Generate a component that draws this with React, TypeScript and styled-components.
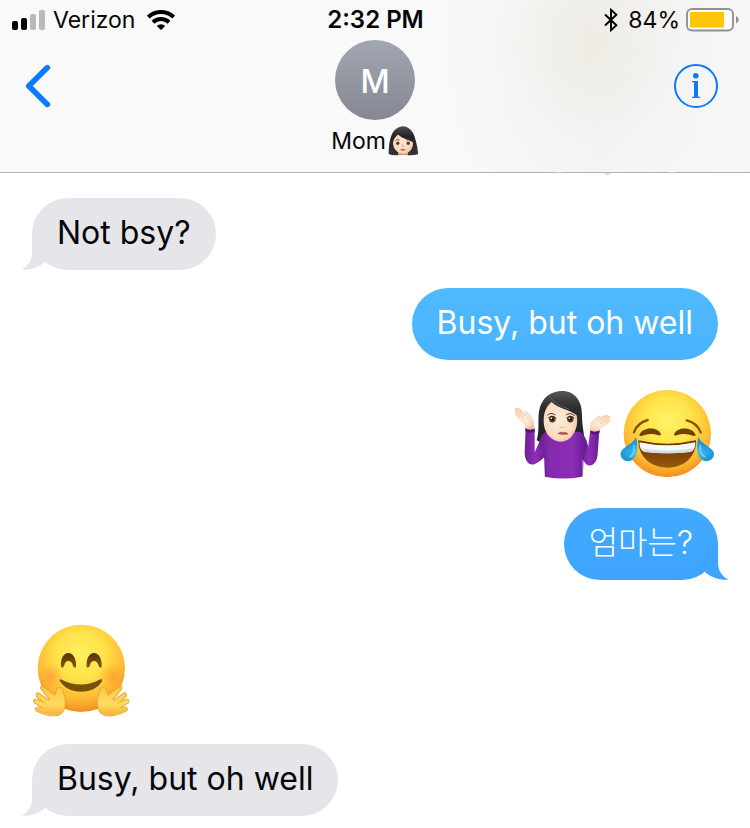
import React from "react";
import styled, { createGlobalStyle, css } from "styled-components";

const GlobalStyle = createGlobalStyle`
  * { box-sizing: border-box; }
  body {
    margin: 0;
    background: #fff;
    color: #060608;
    font-family: Inter, "Noto Sans CJK KR", sans-serif;
  }
  button {
    padding: 0;
    border: 0;
    background: none;
    color: inherit;
    font: inherit;
    cursor: pointer;
  }
  svg { display: block; flex: none; }
`;

const Screen = styled.div`
  display: flex;
  flex-direction: column;
  min-height: 100vh;
  overflow: hidden;
`;

const Header = styled.header`
  position: relative;
  border-bottom: 1px solid #b0b0b2;
  background:
    radial-gradient(ellipse 160px 180px at 79% 25%, rgba(234, 232, 220, 0.7), rgba(240, 240, 236, 0.35) 55%, transparent),
    linear-gradient(90deg, #f9f9f9 60%, #f6f4f6 80%, #f8f7f8);

  /* Bottom edge of a message that has scrolled under the bar. */
  &::after {
    content: "";
    position: absolute;
    top: 100%;
    left: 72%;
    width: 20%;
    height: 4px;
    background:
      radial-gradient(ellipse 7px 2px at 12% 0, #d4d4d6, transparent),
      radial-gradient(ellipse 5px 4px at 45% 0, #b9b9bc, transparent),
      radial-gradient(ellipse 6px 2px at 88% 0, #d4d4d6, transparent);
  }
`;

const StatusBar = styled.div`
  display: grid;
  grid-template-columns: 1fr auto 1fr;
  align-items: center;
  height: 40px;
  padding: 0 11px 0 12px;
  font-size: 23px;
  line-height: 40px;
`;

const StatusGroup = styled.div<{ $end?: boolean }>`
  display: flex;
  align-items: center;
  justify-content: ${(p) => (p.$end ? "flex-end" : "flex-start")};
  gap: ${(p) => (p.$end ? "6px" : "8px")};
`;

const Carrier = styled.span`
  margin-right: 4px;
`;

const Percent = styled.span`
  margin-left: 4px;
`;

const Time = styled.time`
  font-size: 24px;
  font-weight: 600;
`;

const NavBar = styled.nav`
  display: grid;
  grid-template-columns: 1fr auto 1fr;
  align-items: start;
  min-height: 132px;
  padding: 0 32px;
`;

const NavButton = styled.button<{ $end?: boolean }>`
  margin: 24px 0 0 ${(p) => (p.$end ? "0" : "-8px")};
  justify-self: ${(p) => (p.$end ? "end" : "start")};
  color: #0a7aff;
`;

const Contact = styled.button`
  display: flex;
  flex-direction: column;
  align-items: center;
`;

const Avatar = styled.span`
  display: grid;
  place-items: center;
  width: 80px;
  height: 80px;
  padding-top: 2px;
  border-radius: 50%;
  background: linear-gradient(#a2a6b1, #858892);
  color: #fff;
  font-size: 32px;
  font-weight: 500;
`;

const ContactName = styled.span`
  display: flex;
  align-items: center;
  gap: 2px;
  height: 42px;
  font-size: 23px;
`;

const Thread = styled.ul`
  display: flex;
  flex-direction: column;
  margin: 0;
  padding: 25px 32px 12px;
  list-style: none;
`;

const Message = styled.li<{ $sent?: boolean; $gap?: number }>`
  display: flex;
  gap: 8px;
  justify-content: ${(p) => (p.$sent ? "flex-end" : "flex-start")};
  margin-top: ${(p) => p.$gap ?? 0}px;
`;

const EmojiGroup = styled.span<{ $sent?: boolean }>`
  display: flex;
  gap: 8px;
  padding: 0 ${(p) => (p.$sent ? "3px" : "1px")};
`;

const Bubble = styled.div<{ $from: string; $to: string; $sent?: boolean }>`
  position: relative;
  padding: 15px 25px 17px;
  border-radius: 36px;
  background: linear-gradient(${(p) => p.$from}, ${(p) => p.$to});
  color: ${(p) => (p.$sent ? "#fff" : "#060608")};
  font-size: 32px;
  line-height: 40px;
`;

const Korean = styled.span`
  font-weight: 300;
`;

const TailSvg = styled.svg<{ $sent?: boolean }>`
  position: absolute;
  bottom: 0;
  ${(p) => (p.$sent ? css`right: -11px; transform: scaleX(-1);` : css`left: -11px;`)}
`;

function Tail({ color, sent }: { color: string; sent?: boolean }) {
  return (
    <TailSvg $sent={sent} width="36" height="36" viewBox="0 0 36 36" fill={color} aria-hidden="true">
      <path d="M11 0V19C11 26 7 33 0 35.6C9 36.4 16 34 23 29L30 20L20 0Z" />
    </TailSvg>
  );
}

function Signal() {
  return (
    <svg width="33" height="20" viewBox="0 0 33 20" role="img" aria-label="Signal strength">
      <rect x="0" y="11" width="6" height="9" rx="2" />
      <rect x="9" y="8" width="6" height="12" rx="2" />
      <rect x="18" y="4" width="6" height="16" rx="2" fill="#b9b9b9" />
      <rect x="27" y="0" width="6" height="20" rx="2" fill="#b9b9b9" />
    </svg>
  );
}

function Wifi() {
  return (
    <svg width="28" height="20" viewBox="0 0 28 20" fill="none" stroke="#000" strokeWidth="4" role="img" aria-label="Wi-Fi">
      <path d="M1.3 7.1a18.3 18.3 0 0 1 25.4 0" />
      <path d="M6 12.2a11.7 11.7 0 0 1 16 0" />
      <path d="M9.8 16a6.1 6.1 0 0 1 8.4 0L14 20Z" fill="#000" stroke="none" />
    </svg>
  );
}

function Bluetooth() {
  return (
    <svg width="14" height="24" viewBox="0 0 14 24" fill="none" stroke="#000" strokeWidth="1.9" role="img" aria-label="Bluetooth">
      <path d="M1 6.5L12.4 17.3L7 22.2V1.8L12.4 6.7L1 17.5" />
    </svg>
  );
}

function Battery() {
  return (
    <svg width="53" height="24" viewBox="0 0 53 24" role="img" aria-label="Battery 84%">
      <rect x="1" y="1" width="46" height="21.5" rx="5" fill="#fbfbfa" stroke="#929292" strokeWidth="1.9" />
      <rect x="4" y="4" width="34" height="15.5" rx="1" fill="#fdc708" />
      <path d="M50 8Q52.8 9 52.8 11.8T50 15.5Z" fill="#929292" />
    </svg>
  );
}

function Chevron() {
  return (
    <svg width="28" height="44" viewBox="0 0 28 44" fill="none" stroke="currentColor" strokeWidth="5.6" strokeLinecap="round" strokeLinejoin="round">
      <path d="M23.4 3.6L4.8 22L23.4 40.4" />
    </svg>
  );
}

function Info() {
  return (
    <svg width="44" height="44" viewBox="0 0 44 44">
      <circle cx="22" cy="22" r="21" fill="none" stroke="currentColor" strokeWidth="2" />
      <circle cx="21.8" cy="11.7" r="2.8" fill="currentColor" />
      <path d="M18 17H24V32.8H26.2V34H18V32.8H20V18.3H18Z" fill="currentColor" />
    </svg>
  );
}

function WomanFace() {
  return (
    <svg width="31" height="30" viewBox="23 21 92 89" role="img" aria-label="Woman">
      <defs>
        <linearGradient id="wHair" x1="0" y1="0" x2="0" y2="1">
          <stop offset="0" stopColor="#4c4c4e" />
          <stop offset=".35" stopColor="#242426" />
          <stop offset="1" stopColor="#343438" />
        </linearGradient>
        <radialGradient id="wSkin" cx=".45" cy=".45" r=".6">
          <stop offset="0" stopColor="#ffe9d0" />
          <stop offset=".75" stopColor="#f8d6b8" />
          <stop offset="1" stopColor="#e8b994" />
        </radialGradient>
      </defs>
      <path d="M58 24C74 16 96 31 102 53C108 73 112 91 112 105Q93 110 76 106H59Q40 110 25 104C25 82 28 56 37 41Q46 27 58 24Z" fill="url(#wHair)" />
      <path d="M53 91H83L82 106H53Z" fill="#dba982" />
      <path d="M38 70C40 58 46 51 53 46C64 58 82 60 97 69C99 85 89 103 68 104C49 103 37 86 38 70Z" fill="url(#wSkin)" />
      <path d="M46 64Q51 59 57 63M77 63Q84 59 90 65" fill="none" stroke="#4a352a" strokeWidth="2.5" />
      <ellipse cx="52" cy="72" rx="6.5" ry="5" fill="#fff" />
      <ellipse cx="83" cy="72" rx="6.5" ry="5" fill="#fff" />
      <circle cx="52" cy="72" r="5" fill="#59341d" />
      <circle cx="83" cy="72" r="5" fill="#59341d" />
      <path d="M67 75L65 83H70" fill="none" stroke="#d79a76" strokeWidth="2" />
      <path d="M58 91Q67 87 77 91Q67 98 58 91Z" fill="#c85c59" />
    </svg>
  );
}

function Shrug() {
  return (
    <svg width="96" height="96" viewBox="30 24 288 288" role="img" aria-label="Woman shrugging">
      <defs>
        <linearGradient id="sHair" x1="0" y1="0" x2="0" y2="1">
          <stop offset="0" stopColor="#575759" />
          <stop offset=".3" stopColor="#2d2d30" />
          <stop offset="1" stopColor="#202023" />
        </linearGradient>
        <radialGradient id="sSkin" cx=".45" cy=".45" r=".6">
          <stop offset="0" stopColor="#ffecd8" />
          <stop offset=".75" stopColor="#fadcc0" />
          <stop offset="1" stopColor="#ecc09c" />
        </radialGradient>
        <linearGradient id="sTop" x1="0" y1="0" x2="1" y2="0">
          <stop offset="0" stopColor="#6e1d94" />
          <stop offset=".22" stopColor="#862ab0" />
          <stop offset=".7" stopColor="#892db4" />
          <stop offset="1" stopColor="#64178b" />
        </linearGradient>
        <linearGradient id="sArm" x1="0" y1="0" x2="1" y2="0">
          <stop offset="0" stopColor="#711d99" />
          <stop offset=".5" stopColor="#8c2fb6" />
          <stop offset="1" stopColor="#691b8f" />
        </linearGradient>
      </defs>
      <path d="M102 94Q112 42 160 34C205 27 231 59 231 105C231 145 240 165 237 183Q208 196 170 190Q119 195 95 181C104 152 98 125 102 94Z" fill="url(#sHair)" />
      <path d="M62 143L59 217C59 247 76 260 91 251Q111 242 123 225L126 162Q108 172 101 190L89 217L89 144Z" fill="url(#sArm)" />
      <path d="M283 150L278 222C276 252 257 264 243 252L224 227L228 162Q241 176 249 204L256 150Z" fill="url(#sArm)" />
      <path d="M126 154Q106 164 103 188L119 238L120 290Q174 301 231 290L233 239L249 198Q243 167 226 156Z" fill="url(#sTop)" />
      <path d="M118 224L121 290M236 220L232 289" stroke="#5b167d" strokeWidth="3" fill="none" opacity=".6" />
      <path d="M61 143Q75 151 89 146V156Q73 161 61 153ZM256 150Q271 156 284 150L283 160Q269 166 256 160Z" fill="#541675" />
      <path d="M63 145L59 130C44 120 31 109 30 98C28 92 33 92 37 98L30 88C30 83 35 84 39 89L49 99L36 87C37 82 43 84 47 88L59 99C59 92 66 93 69 99C75 111 82 108 84 122L88 145Q75 151 63 145Z" fill="url(#sSkin)" stroke="#f6d2b3" strokeWidth="2" />
      <path d="M256 151L258 131C259 121 266 124 270 119C275 111 281 106 286 109V113C295 107 303 104 308 107L299 113C308 109 315 107 316 112L302 121C312 117 318 117 315 123C307 132 299 139 287 141L284 150Q270 157 256 151Z" fill="url(#sSkin)" stroke="#f6d2b3" strokeWidth="2" />
      <path d="M37 99L57 114M41 91L60 108M299 113L282 123M302 121L285 131" fill="none" stroke="#dcab87" strokeWidth="1.6" />
      <path d="M116 122C116 98 124 78 140 66C156 84 192 88 215 106C220 132 213 156 197 173Q182 185 166 185Q148 184 135 171C122 158 116 142 116 122Z" fill="url(#sSkin)" />
      <path d="M134 49Q150 75 192 87" fill="none" stroke="#737376" strokeWidth="2" />
      <path d="M127 106Q137 95 151 105M183 105Q194 96 209 107" fill="none" stroke="#5b4030" strokeWidth="3" />
      <ellipse cx="142" cy="118" rx="14" ry="11" fill="#fff7ed" />
      <ellipse cx="196" cy="118" rx="14" ry="11" fill="#fff7ed" />
      <circle cx="142" cy="118" r="10" fill="#674120" />
      <circle cx="196" cy="118" r="10" fill="#674120" />
      <circle cx="142" cy="118" r="5" fill="#171313" />
      <circle cx="196" cy="118" r="5" fill="#171313" />
      <circle cx="139" cy="115" r="2.4" fill="#fff" />
      <circle cx="193" cy="115" r="2.4" fill="#fff" />
      <path d="M129 115Q140 102 154 115M184 115Q196 102 208 115" fill="none" stroke="#2d211c" strokeWidth="2.6" />
      <path d="M163 141Q170 147 178 141" fill="none" stroke="#d7a381" strokeWidth="2.4" />
      <path d="M158 161Q165 153 173 156Q184 153 190 162Q174 168 158 161Z" fill="#c46e65" />
      <path d="M159 161Q175 157 189 162" stroke="#8f4545" strokeWidth="2" fill="none" />
    </svg>
  );
}

function Joy() {
  return (
    <svg width="96" height="96" viewBox="27 24 288 288" role="img" aria-label="Face with tears of joy">
      <defs>
        <radialGradient id="jFace" cx=".5" cy=".36" r=".66">
          <stop offset="0" stopColor="#fff266" />
          <stop offset=".4" stopColor="#ffe54c" />
          <stop offset=".75" stopColor="#fdbe32" />
          <stop offset="1" stopColor="#ee8620" />
        </radialGradient>
        <linearGradient id="jMouth" x1="0" y1="0" x2="0" y2="1">
          <stop offset="0" stopColor="#653304" />
          <stop offset="1" stopColor="#9a5909" />
        </linearGradient>
        <radialGradient id="jTear" cx=".5" cy=".65">
          <stop offset="0" stopColor="#7adfff" />
          <stop offset=".65" stopColor="#41bdf2" />
          <stop offset="1" stopColor="#1f95d8" />
        </radialGradient>
      </defs>
      <circle cx="172" cy="161" r="131" fill="url(#jFace)" />
      <path d="M85 181Q172 201 258 181C260 229 223 263 173 263C121 263 85 229 85 181Z" fill="url(#jMouth)" />
      <path d="M88 187Q172 205 256 187Q256 212 242 215Q173 224 102 215Q89 211 88 187Z" fill="#f8f8f8" />
      <path d="M92 205Q173 219 253 205Q249 214 241 216Q173 224 103 216Q94 212 92 205Z" fill="#d4dce0" />
      <path d="M88 165C97 139 145 139 153 163Q151 168 145 166Q121 158 96 167Q88 170 88 165ZM192 163C201 139 249 139 257 165Q256 170 249 167Q223 158 200 166Q193 168 192 163Z" fill="#734007" />
      <path d="M72 157Q82 128 113 120M230 121Q261 128 272 157" fill="none" stroke="#875009" strokeWidth="7" strokeLinecap="round" />
      <path d="M78 171C85 203 82 230 65 241C46 251 26 232 33 216C38 201 69 193 78 171ZM265 170C274 194 306 201 311 217C317 235 295 250 278 241C260 230 258 201 265 170Z" fill="url(#jTear)" />
      <path d="M72 196Q75 224 60 230M271 196Q268 222 284 230" fill="none" stroke="#9becff" strokeWidth="5" strokeLinecap="round" opacity=".6" />
    </svg>
  );
}

function Hug() {
  return (
    <svg width="96" height="96" viewBox="39 42 288 288" role="img" aria-label="Hugging face">
      <defs>
        <radialGradient id="hFace" cx=".49" cy=".35" r=".67">
          <stop offset="0" stopColor="#fff060" />
          <stop offset=".4" stopColor="#ffe34a" />
          <stop offset=".74" stopColor="#fdbc34" />
          <stop offset="1" stopColor="#ef881f" />
        </radialGradient>
        <radialGradient id="hCheek">
          <stop offset="0" stopColor="#ff7a2a" stopOpacity=".45" />
          <stop offset="1" stopColor="#ff8a2a" stopOpacity="0" />
        </radialGradient>
        <linearGradient id="hHand" x1="0" y1="0" x2="0" y2="1">
          <stop offset="0" stopColor="#fcc745" />
          <stop offset=".6" stopColor="#ffdc60" />
          <stop offset="1" stopColor="#f5ae36" />
        </linearGradient>
        <linearGradient id="hEye" x1="0" y1="0" x2="0" y2="1">
          <stop offset="0" stopColor="#573008" />
          <stop offset="1" stopColor="#8d5a09" />
        </linearGradient>
        <path
          id="hugHand"
          d="M91 267C81 258 73 247 66 238C60 232 65 228 73 235L100 255C109 258 108 251 111 241C114 230 127 232 128 244C129 255 137 267 134 284C132 306 119 317 96 316C84 316 72 311 53 303C43 298 47 292 57 293L79 298C68 292 56 285 47 279C38 272 43 267 54 271L80 284L52 260C46 250 53 247 60 254L86 272Z"
        />
      </defs>
      <circle cx="184" cy="175" r="131" fill="url(#hFace)" />
      <circle cx="92" cy="200" r="40" fill="url(#hCheek)" />
      <circle cx="276" cy="200" r="40" fill="url(#hCheek)" />
      <path d="M123 170C121 145 131 129 145 129C159 129 170 147 168 171Q163 177 159 168Q156 153 145 153Q135 153 132 169Q126 176 123 170ZM200 170C198 145 208 129 222 129C236 129 247 147 245 171Q240 177 236 168Q233 153 222 153Q212 153 209 169Q203 176 200 170Z" fill="url(#hEye)" />
      <path d="M119 212Q118 206 125 209Q184 239 241 208Q248 206 246 213C225 255 144 257 119 212Z" fill="#775009" />
      <g strokeLinejoin="round">
        <g fill="#e59a2a" stroke="#e59a2a" strokeWidth="6">
          <use href="#hugHand" />
          <use href="#hugHand" transform="translate(368 0) scale(-1 1)" />
        </g>
        <g fill="url(#hHand)" stroke="#fbc84a" strokeWidth="3">
          <use href="#hugHand" />
          <use href="#hugHand" transform="translate(368 0) scale(-1 1)" />
        </g>
      </g>
    </svg>
  );
}

const RECEIVED = "#e5e5ea";

export default function App() {
  return (
    <Screen>
      <GlobalStyle />
      <Header>
        <StatusBar>
          <StatusGroup>
            <Signal />
            <Carrier>Verizon</Carrier>
            <Wifi />
          </StatusGroup>
          <Time>2:32 PM</Time>
          <StatusGroup $end>
            <Bluetooth />
            <Percent>84%</Percent>
            <Battery />
          </StatusGroup>
        </StatusBar>
        <NavBar>
          <NavButton type="button" aria-label="Back">
            <Chevron />
          </NavButton>
          <Contact type="button">
            <Avatar>M</Avatar>
            <ContactName>
              Mom
              <WomanFace />
            </ContactName>
          </Contact>
          <NavButton type="button" aria-label="Details" $end>
            <Info />
          </NavButton>
        </NavBar>
      </Header>
      <Thread>
        <Message>
          <Bubble $from={RECEIVED} $to={RECEIVED}>
            <Tail color={RECEIVED} />
            Not bsy?
          </Bubble>
        </Message>
        <Message $sent $gap={18}>
          <Bubble $sent $from="#4fbaff" $to="#49b3fe">
            Busy, but oh well
          </Bubble>
        </Message>
        <Message $sent $gap={28}>
          <EmojiGroup $sent>
            <Shrug />
            <Joy />
          </EmojiGroup>
        </Message>
        <Message $sent $gap={24}>
          <Bubble $sent $from="#42aaff" $to="#3ea4fe">
            <Tail color="#3ea4fe" sent />
            <Korean lang="ko">엄마는?</Korean>
          </Bubble>
        </Message>
        <Message $gap={44}>
          <EmojiGroup>
            <Hug />
          </EmojiGroup>
        </Message>
        <Message $gap={24}>
          <Bubble $from={RECEIVED} $to={RECEIVED}>
            <Tail color={RECEIVED} />
            Busy, but oh well
          </Bubble>
        </Message>
      </Thread>
    </Screen>
  );
}
